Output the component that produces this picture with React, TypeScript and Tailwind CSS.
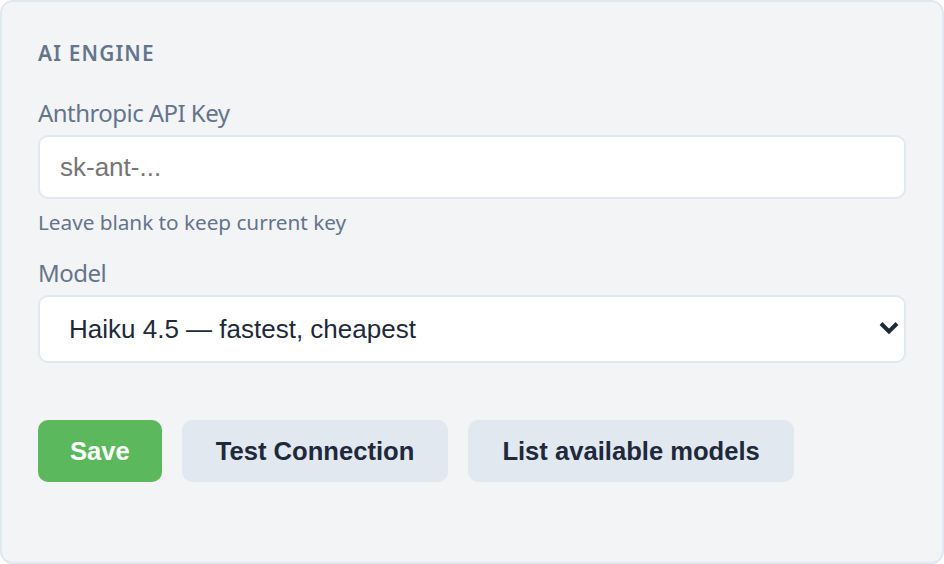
import { useState } from "react";

const MODELS = [
    { id: "claude-haiku-4-5", label: "Haiku 4.5 — fastest, cheapest" },
    { id: "claude-sonnet-4-5", label: "Sonnet 4.5 — balanced" },
    { id: "claude-opus-4-1", label: "Opus 4.1 — most capable" },
];

export default function App() {
    const [apiKey, setApiKey] = useState("");
    const [model, setModel] = useState(MODELS[0].id);

    return (
        <div className="w-[944px] h-[564px] bg-white">
            <div className="h-full rounded-[13px] border-2 border-[#e2e8f0] bg-[#f3f4f6] pl-[36px] pr-[36px] pt-[37px] font-['Noto_Sans',sans-serif]">
                <h3 className="text-[20.8px] leading-[28px] font-semibold tracking-[1.2px] uppercase text-[#64748b]">
                    AI Engine
                </h3>

                {/* API key */}
                <label className="block mt-[30px] text-[24px] leading-[32px] tracking-[-0.55px] text-[#64748b]">
                    Anthropic API Key
                </label>
                <input
                    type="password"
                    value={apiKey}
                    onChange={(e) => setApiKey(e.target.value)}
                    placeholder="sk-ant-..."
                    className="mt-[6px] block w-full h-[64px] rounded-[10px] border-2 border-[#e2e8f0] bg-white px-[20px] font-['Liberation_Sans',Arial,sans-serif] text-[26px] text-[#1e293b] placeholder:text-[#757575] outline-none"
                />
                <p className="mt-[9px] text-[20.8px] leading-[28px] tracking-[-0.05px] text-[#64748b]">
                    Leave blank to keep current key
                </p>

                {/* Model picker */}
                <label className="block mt-[21px] text-[24px] leading-[32px] tracking-[-0.55px] text-[#64748b]">
                    Model
                </label>
                <div className="relative mt-[6px]">
                    <select
                        value={model}
                        onChange={(e) => setModel(e.target.value)}
                        className="block w-full h-[68px] appearance-none rounded-[10px] border-2 border-[#e2e8f0] bg-white pl-[29px] pr-[60px] font-['Liberation_Sans',Arial,sans-serif] text-[26px] text-[#1e293b] outline-none"
                    >
                        {MODELS.map((m) => (
                            <option key={m.id} value={m.id}>
                                {m.label}
                            </option>
                        ))}
                    </select>
                    <svg
                        className="pointer-events-none absolute right-[7px] top-[26px]"
                        width="20"
                        height="14"
                        viewBox="0 0 20 14"
                        fill="none"
                    >
                        <path d="M2 2.5 L10 10.5 L18 2.5" stroke="#1e293b" strokeWidth="4" strokeLinecap="butt" strokeLinejoin="miter" />
                    </svg>
                </div>

                {/* Actions */}
                <div className="mt-[57px] flex gap-[20px] font-['Liberation_Sans',Arial,sans-serif] text-[25.6px] font-bold">
                    <button className="h-[62px] rounded-[10px] bg-[#5cb85c] px-[32px] text-white">
                        Save
                    </button>
                    <button className="h-[62px] rounded-[10px] bg-[#e2e8f0] px-[34px] text-[#1e293b]">
                        Test Connection
                    </button>
                    <button className="h-[62px] rounded-[10px] bg-[#e2e8f0] px-[34px] text-[#1e293b]">
                        List available models
                    </button>
                </div>
            </div>
        </div>
    );
}
